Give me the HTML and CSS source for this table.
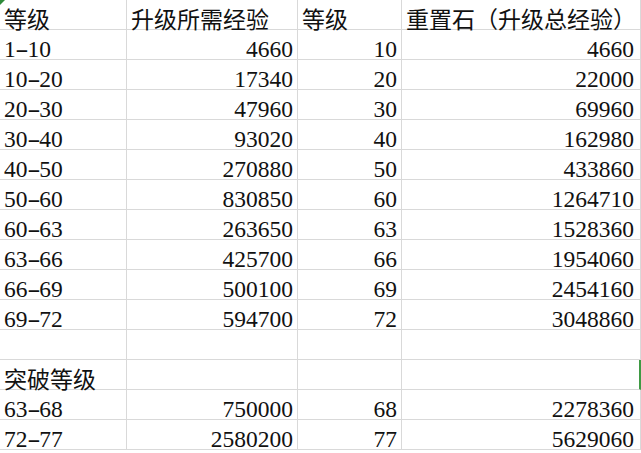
FILE: index.html
```html
<!DOCTYPE html>
<html lang="zh-CN">
<head>
<meta charset="utf-8">
<title>等级经验表</title>
<link rel="stylesheet" href="styles.css">
</head>
<body>
<div class="sheet">
  <div class="c first"><span class="zh">等级</span><span class="corner"></span></div><div class="c"><span class="zh">升级所需经验</span></div><div class="c"><span class="zh">等级</span></div><div class="c"><span class="zh">重置石（升级总经验）</span></div>
  <div class="c">1<span class="d">-</span>10</div><div class="c r">4660</div><div class="c r">10</div><div class="c r last">4660</div>
  <div class="c">10<span class="d">-</span>20</div><div class="c r">17340</div><div class="c r">20</div><div class="c r last">22000</div>
  <div class="c">20<span class="d">-</span>30</div><div class="c r">47960</div><div class="c r">30</div><div class="c r last">69960</div>
  <div class="c">30<span class="d">-</span>40</div><div class="c r">93020</div><div class="c r">40</div><div class="c r last">162980</div>
  <div class="c">40<span class="d">-</span>50</div><div class="c r">270880</div><div class="c r">50</div><div class="c r last">433860</div>
  <div class="c">50<span class="d">-</span>60</div><div class="c r">830850</div><div class="c r">60</div><div class="c r last">1264710</div>
  <div class="c">60<span class="d">-</span>63</div><div class="c r">263650</div><div class="c r">63</div><div class="c r last">1528360</div>
  <div class="c">63<span class="d">-</span>66</div><div class="c r">425700</div><div class="c r">66</div><div class="c r last">1954060</div>
  <div class="c">66<span class="d">-</span>69</div><div class="c r">500100</div><div class="c r">69</div><div class="c r last">2454160</div>
  <div class="c">69<span class="d">-</span>72</div><div class="c r">594700</div><div class="c r">72</div><div class="c r last">3048860</div>
  <div class="c"></div><div class="c"></div><div class="c"></div><div class="c"></div>
  <div class="c"><span class="zh">突破等级</span></div><div class="c"></div><div class="c"></div><div class="c sel"></div>
  <div class="c">63<span class="d">-</span>68</div><div class="c r">750000</div><div class="c r">68</div><div class="c r last">2278360</div>
  <div class="c">72<span class="d">-</span>77</div><div class="c r">2580200</div><div class="c r">77</div><div class="c r last">5629060</div>
</div>
</body>
</html>
```

FILE: styles.css
```css
html, body {
  margin: 0;
  padding: 0;
  background: #ffffff;
}

.sheet {
  display: grid;
  grid-template-columns: 127px 171px 104px 239px;
  grid-auto-rows: 30px;
  font-family: "Liberation Serif", "Times New Roman", serif;
  font-size: 23.5px;
  color: #111111;
}

.c {
  position: relative;
  box-sizing: border-box;
  height: 30px;
  border-right: 1px solid #d9d9d9;
  border-bottom: 1px solid #d9d9d9;
  padding: 7px 4px 0 4px;
  line-height: 24px;
  white-space: nowrap;
}

.zh {
  font-family: "Noto Sans CJK SC", sans-serif;
  font-size: 23px;
  line-height: 24px;
  position: relative;
  top: -1px;
}

.r {
  text-align: right;
}

.last {
  padding-right: 6px;
}

.d {
  display: inline-block;
  width: 0.5em;
  text-align: center;
  transform: scaleX(1.7);
}

.sel {
  border-right: 2px solid #3f9a44;
}

.corner {
  position: absolute;
  left: 0;
  top: 0;
  width: 0;
  height: 0;
  border-top: 5px solid #2f8a3a;
  border-right: 5px solid transparent;
}
```
